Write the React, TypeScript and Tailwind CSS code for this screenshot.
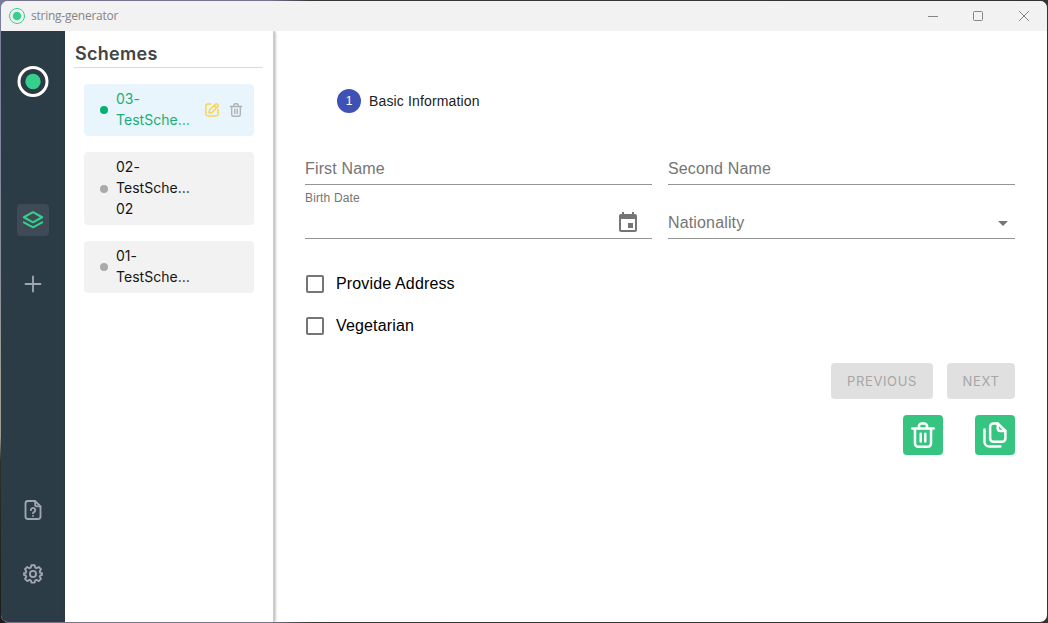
import type { ReactNode } from "react";

function Logo({ className, ring, width, r = 14, core = 7.5 }: { className: string; ring: string; width: number; r?: number; core?: number }) {
  return (
    <svg className={className} viewBox="0 0 32 32" fill="none">
      <circle cx="16" cy="16" r={r} stroke={ring} strokeWidth={width} />
      <circle cx="16" cy="16" r={core} fill="#36cf8c" />
    </svg>
  );
}

function Icon({ className, size = 24, width = 1.5, children }: { className?: string; size?: number; width?: number; children: ReactNode }) {
  return (
    <svg className={className} width={size} height={size} viewBox="0 0 24 24" fill="none" stroke="currentColor" strokeWidth={width} strokeLinecap="round" strokeLinejoin="round">
      {children}
    </svg>
  );
}

const trash = (
  <>
    <path d="M2.1 6h19.8" />
    <path d="M4.600 6v13.800a3 3 0 0 0 3 3h8.800a3 3 0 0 0 3-3V6" />
    <path d="M8.200 5.700V4.100a2.700 2.700 0 0 1 2.700-2.700h2.200a2.700 2.700 0 0 1 2.700 2.700v1.600" />
    <path d="M9.900 10.800v7.200M14.100 10.800v7.200" />
  </>
);

function SchemeCard({ lines, active = false }: { lines: string[]; active?: boolean }) {
  return (
    <li className={`flex w-[170px] items-center rounded-[4px] py-[5px] pl-4 ${active ? "bg-[#e9f5fc] text-[#19ad77]" : "bg-[#f2f2f2] text-[#151515]"}`}>
      <span className={`mr-2 size-2 shrink-0 rounded-full ${active ? "bg-[#05b171]" : "bg-[#aaaaaa]"}`} />
      <span className="-mt-px mb-px flex w-[76px] flex-col text-[14px] leading-[21px] tracking-[0.02px]">
        {lines.map((line) => (
          <span key={line} className="whitespace-nowrap">{line}</span>
        ))}
      </span>
      {active && (
        <span className="ml-[13px] flex items-center gap-[10px]">
          <Icon size={14} width={2.500} className="text-[#fcd34d]">
            <path d="M10 1.800H5a3.500 3.500 0 0 0-3.500 3.500v13.400A3.500 3.500 0 0 0 5 22.200h14a3.500 3.500 0 0 0 3.500-3.500V11" />
            <path d="m7 17 .7-5L17.800 2.300a2.200 2.200 0 0 1 3.100 0l.8.8a2.200 2.200 0 0 1 0 3.100L12 16.200zM16 4.500 19.500 8" />
          </Icon>
          <Icon size={14} width={2.500} className="text-[#b0b3b6]">{trash}</Icon>
        </span>
      )}
    </li>
  );
}

function Check({ label }: { label: string }) {
  return (
    <label className="flex h-[42px] items-center">
      <span className="ml-px size-[18px] rounded-[2px] border-2 border-[#757575]" />
      <span className="ml-3 text-[16px] leading-6 tracking-[0.15px] text-black">{label}</span>
    </label>
  );
}

export default function App() {
  return (
    <div className="h-[623px] w-[1048px] overflow-hidden bg-[linear-gradient(180deg,#787c9c_0%,#878d9d_40%,#a09b93_60%,#a09b93_70%,#302d2d_74%,#1d1b1b_100%)] font-['Inter',sans-serif]">
      <div className="h-full bg-[linear-gradient(90deg,transparent_0,transparent_4px,#77748c_8px,#77748c_270px,#383838_310px,#333333_100%)] p-px">
        <div className="flex h-full flex-col overflow-hidden rounded-[7px] bg-white">
          <header className="z-10 flex h-[30px] shrink-0 items-center bg-[#f2f2f2] pl-2">
            <Logo className="size-4" ring="#36cf8c" width={2} r={15} core={8.5} />
            <span className="ml-[6px] font-['Open_Sans',sans-serif] text-[12px] leading-4 tracking-[-0.24px] text-[#858585]">string-generator</span>
            <svg className="mr-[17px] ml-auto" width="102" height="12" viewBox="0 0 102 12" fill="none" stroke="#858585">
              <path d="M0 6.500h10M91 1l10 10M101 1 91 11" />
              <rect x="45.5" y="1.5" width="9" height="9" rx="1" />
            </svg>
          </header>
          <div className="flex min-h-0 flex-1">
            <nav className="flex w-16 shrink-0 flex-col items-center bg-[#2c3c46] pt-[34px] pb-[38px] text-[#a0a6b3]">
              <Logo className="h-[33px] w-8" ring="white" width={3} r={14} core={7.7} />
              <span className="mt-[106px] flex size-8 items-center justify-center rounded-[4px] bg-[#3f4a57] text-[#36cf8c]">
                <Icon size={22} width={2.200}>
                  <path d="M12 3.500 22 9l-10 5.500L2 9zM2 14.500l10 5.500 10-5.500" />
                </Icon>
              </span>
              <Icon className="mt-[38px]" size={20} width={2.200}><path d="M12 3v18M3 12h18" /></Icon>
              <Icon className="mt-auto" size={20} width={2.200}>
                <path d="M14.500 1.200H6a3 3 0 0 0-3 3v15.600a3 3 0 0 0 3 3h12a3 3 0 0 0 3-3V7.700z" />
                <path d="M14.500 1.200v4A2.500 2.500 0 0 0 17 7.700h4M9.500 12.200a2.600 2.600 0 1 1 4.200 2c-.9.600-1.700.8-1.700 1.800M12 19v.1" />
              </Icon>
              <Icon className="mt-11" size={20} width={2.200}>
                <circle cx="12" cy="12" r="3.700" />
                <path d="M10 1.500h4l.6 2.900 1.700.7 2.500-1.600 2.800 2.800L20 8.900l.7 1.700 2.100.3v2.300l-2.100.4-.7 1.700 1.600 2.500-2.800 2.800-2.500-1.600-1.700.7-.6 2.700h-4l-.6-2.700-1.700-.7-2.500 1.600-2.800-2.800L4 15.300l-.7-1.700-2.100-.4v-2.300l2.100-.3.7-1.700-1.600-2.600 2.800-2.800 2.500 1.600 1.700-.7z" />
              </Icon>
            </nav>
            <aside className="w-[209px] shrink-0 border-r border-[#cccccc] bg-white pl-[9px] shadow-[1px_0_3px_rgba(0,0,0,0.35)]">
              <h1 className="mr-[10px] h-[37px] border-b border-[#d9dce0] pt-[10px] pl-px text-[18px] leading-[26px] font-semibold tracking-[0.3px] text-[#444444]">Schemes</h1>
              <ul className="mt-4 ml-[10px] flex flex-col gap-4">
                <SchemeCard lines={["03-", "TestSche…"]} active />
                <SchemeCard lines={["02-", "TestSche…", "02"]} />
                <SchemeCard lines={["01-", "TestSche…"]} />
              </ul>
            </aside>
            <main className="flex flex-1 flex-col pt-[58px] pr-8 pl-[31px] font-['Liberation_Sans',sans-serif]">
              <div className="ml-8 flex h-6 items-center">
                <span className="flex size-6 items-center justify-center rounded-full bg-[#3f51b5] text-[12px] leading-4 text-white">1</span>
                <span className="ml-2 text-[14px] leading-5 tracking-[0.15px] text-[#212121]">Basic Information</span>
              </div>
              <div className="mt-[41px] grid grid-cols-2 gap-x-4 text-[16px] tracking-[0.15px] text-[#757575]">
                <div className="h-[31px] border-b border-[#949494] pt-1 leading-[22px]">First Name</div>
                <div className="h-[31px] border-b border-[#949494] pt-1 leading-[22px]">Second Name</div>
                <div className="relative h-[54px] border-b border-[#949494] pt-[5px] text-[12px] leading-4">
                  Birth Date
                  <svg className="absolute right-3 bottom-[3px] size-6" viewBox="0 0 24 24" fill="#757575">
                    <path d="M17 12h-5v5h5zM16 1v2H8V1H6v2H5c-1.110 0-2 .9-2 2v14a2 2 0 0 0 2 2h14c1.100 0 2-.9 2-2V5c0-1.100-.9-2-2-2h-1V1zm3 18H5V8h14z" />
                  </svg>
                </div>
                <div className="flex h-[54px] items-end justify-between border-b border-[#949494] pb-1 leading-[22px]">
                  Nationality
                  <svg className="-mb-px size-6" viewBox="0 0 24 24" fill="#757575"><path d="m7 10 5 5 5-5z" /></svg>
                </div>
              </div>
              <div className="mt-6 flex flex-col">
                <Check label="Provide Address" />
                <Check label="Vegetarian" />
              </div>
              <div className="mt-4 flex justify-end gap-[14px] font-['Inter',sans-serif] text-[13px] tracking-[0.62px] text-[#a6a6a6]">
                <button className="h-9 w-[102px] rounded-[4px] bg-[#e0e0e0] pt-px">PREVIOUS</button>
                <button className="h-9 w-[68px] rounded-[4px] bg-[#e0e0e0] pt-px">NEXT</button>
              </div>
              <div className="mt-4 flex justify-end gap-8 text-white">
                <button className="flex size-10 items-center justify-center rounded-[4px] bg-[#36c581]">
                  <Icon size={26} width={2.300}>{trash}</Icon>
                </button>
                <button className="flex size-10 items-center justify-center rounded-[4px] bg-[#36c581]">
                  <Icon size={26} width={2.300}>
                    <path d="M14.500 1.300h-4a3 3 0 0 0-3 3v10.900a3 3 0 0 0 3 3h8.100a3 3 0 0 0 3-3V8.300z" />
                    <path d="M14.500 1.300v4.500A2.500 2.500 0 0 0 17 8.300h4.600M2.300 7v11.200a4.500 4.500 0 0 0 4.500 4.500H17" />
                  </Icon>
                </button>
              </div>
            </main>
          </div>
        </div>
      </div>
    </div>
  );
}
